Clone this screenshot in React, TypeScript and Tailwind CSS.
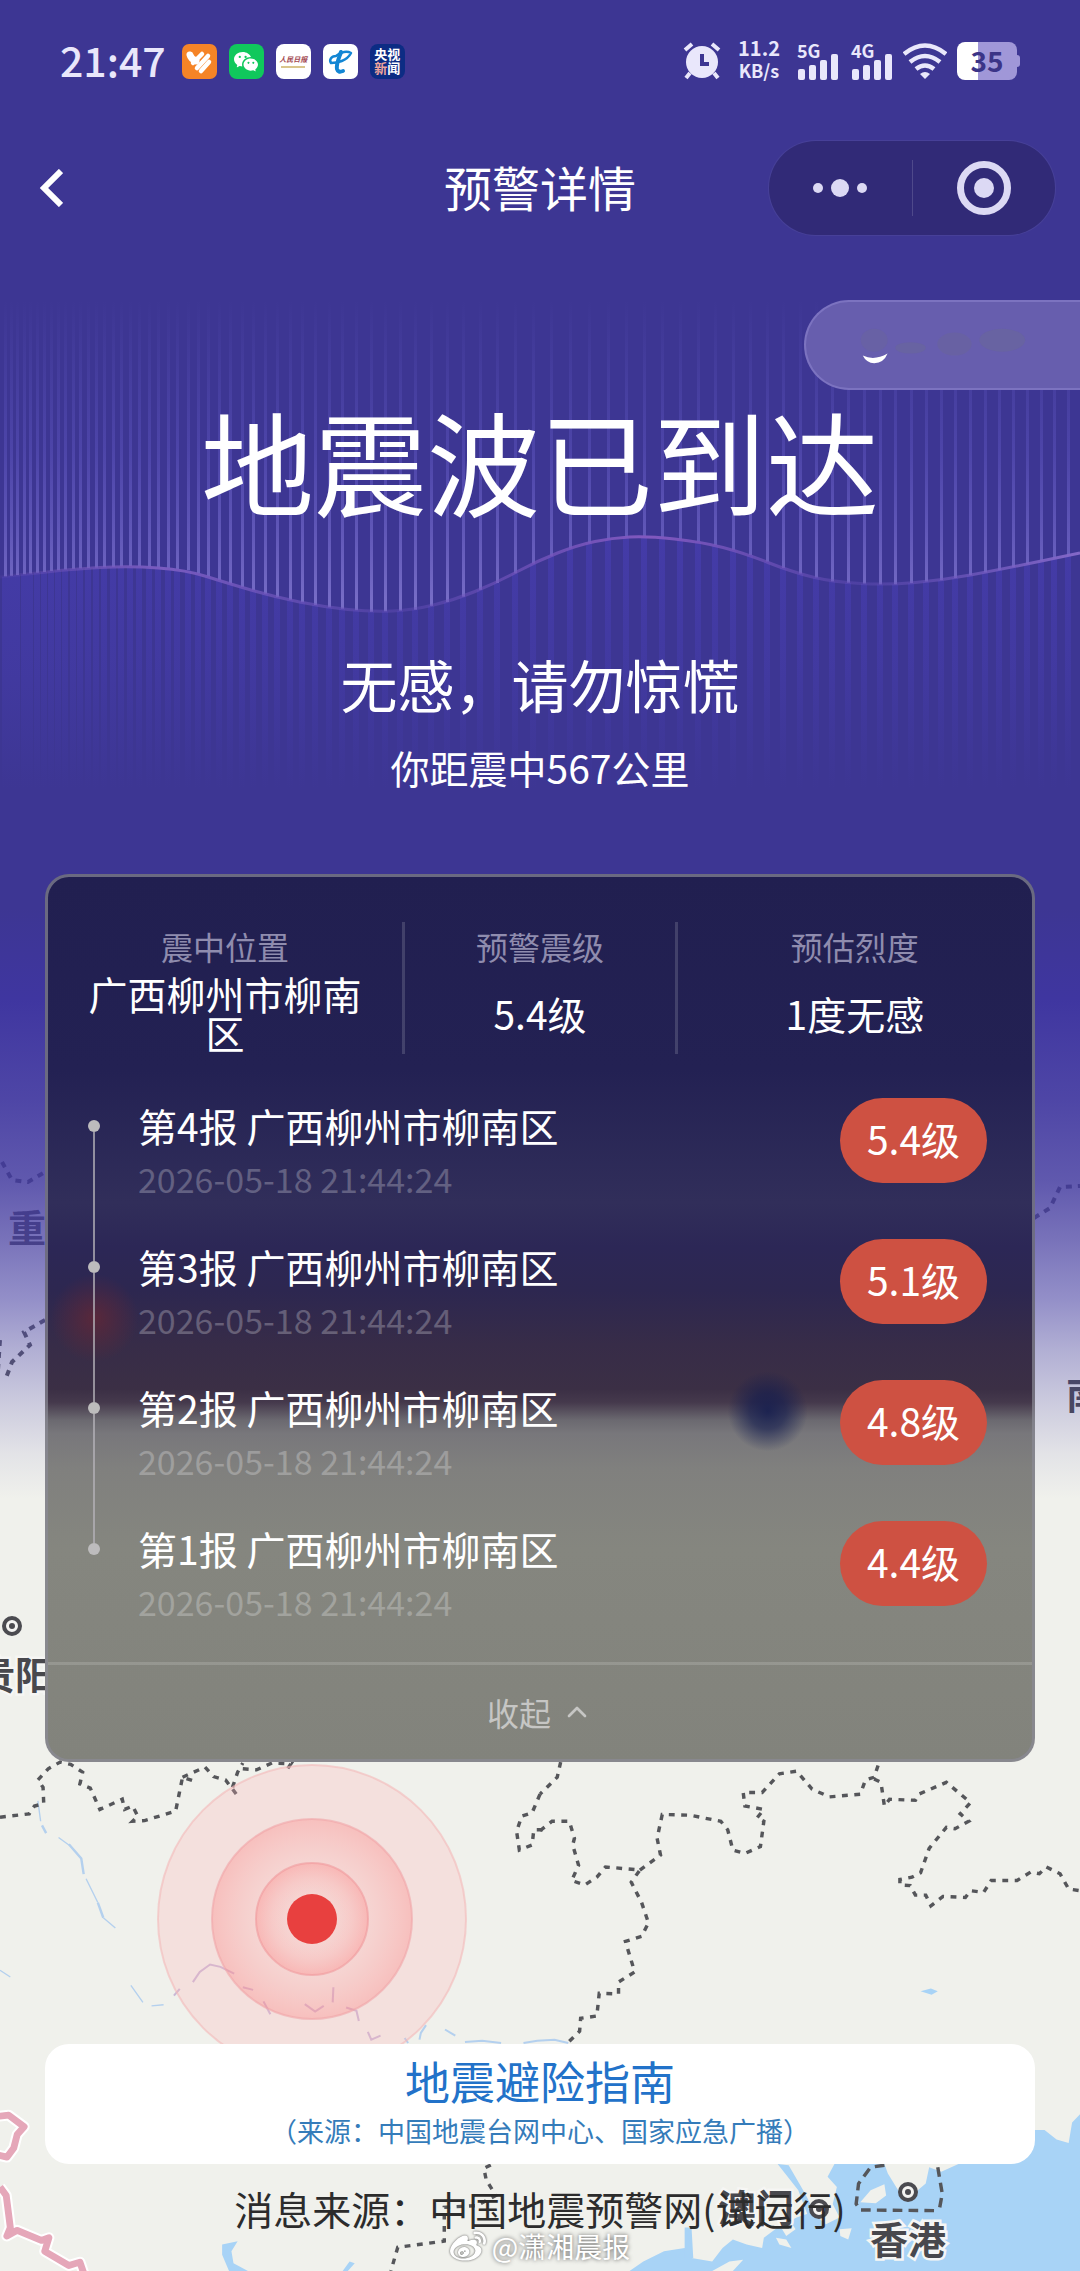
import React, { useState } from "react";
import { SiSinaweibo } from "react-icons/si";
import { BsWechat } from "react-icons/bs";
import { LuChevronUp } from "react-icons/lu";

const reports = [
  { no: 4, level: "5.4级" },
  { no: 3, level: "5.1级" },
  { no: 2, level: "4.8级" },
  { no: 1, level: "4.4级" },
].map((r) => ({ ...r, place: "广西柳州市柳南区", time: "2026-05-18 21:44:24" }));

const stats = [
  { label: "震中位置", value: "广西柳州市柳南区", className: "px-9" },
  { label: "预警震级", value: "5.4级", className: "border-x-3 border-white/15" },
  { label: "预估烈度", value: "1度无感", className: "" },
];

/**
 * Wave curve, sampled as [x, y]
 */
const wave = [
  [0, 577], [69, 569], [131, 566], [186, 570], [227, 583], [275, 597], [324, 607], [372, 612], [413, 610],
  [454, 600], [496, 583], [537, 561], [578, 545], [612, 538], [647, 536], [702, 542], [744, 553], [792, 572],
  [833, 582], [888, 585], [943, 580], [998, 570], [1080, 553],
];

function waveY(x: number) {
  const i = Math.max(1, wave.findIndex((p) => p[0] >= x));
  const [x0, y0] = wave[i - 1];
  const [x1, y1] = wave[i];
  return y0 + ((y1 - y0) * (x - x0)) / (x1 - x0);
}

// Smooth the samples by running quadratic curves through their midpoints
const wavePath =
  `M${wave[0].join(" ")}` +
  wave
    .slice(1, -1)
    .map(([x, y], i) => {
      const [nx, ny] = wave[i + 2];
      return ` Q${x} ${y} ${(x + nx) / 2} ${(y + ny) / 2}`;
    })
    .join("") +
  ` L${wave[wave.length - 1].join(" ")}`;

// Bars stand close together on the left and spread out towards the middle
const bars: number[] = [];
for (let x = 4; x < 1080; x += x < 560 ? 6 + x / 43 : 19 - (x - 560) / 90) {
  bars.push(Math.round(x));
}

function WaveArt() {
  return (
    <g>
      <defs>
        <linearGradient id="barUp" gradientUnits="userSpaceOnUse" x1="0" y1="300" x2="0" y2="600">
          <stop offset="0" stopColor="#6a60d0" stopOpacity="0" />
          <stop offset="0.5" stopColor="#6a60d0" stopOpacity="0.35" />
          <stop offset="1" stopColor="#8f84dc" stopOpacity="0.7" />
        </linearGradient>
        <linearGradient id="barDown" gradientUnits="userSpaceOnUse" x1="0" y1="540" x2="0" y2="790">
          <stop offset="0" stopColor="#463dae" stopOpacity="0.75" />
          <stop offset="0.5" stopColor="#463dae" stopOpacity="0.5" />
          <stop offset="1" stopColor="#463dae" stopOpacity="0" />
        </linearGradient>
        <linearGradient id="waveLine" x1="0" x2="1" y1="0" y2="0">
          <stop offset="0" stopColor="#7a58bc" stopOpacity="0.1" />
          <stop offset="0.15" stopColor="#7a5cc0" />
          <stop offset="0.37" stopColor="#6a52bc" stopOpacity="0.35" />
          <stop offset="0.6" stopColor="#8259bf" />
          <stop offset="0.8" stopColor="#6a52bc" stopOpacity="0.35" />
          <stop offset="1" stopColor="#8468c8" />
        </linearGradient>
      </defs>
      {bars.map((x) => (
        <g key={x}>
          <rect x={x} y={300} width={3} height={waveY(x) - 300} fill="url(#barUp)" />
          <rect x={x - 2} y={waveY(x)} width={6} height={790 - waveY(x)} fill="url(#barDown)" />
        </g>
      ))}
      <path d={wavePath} fill="none" stroke="url(#waveLine)" strokeWidth="3" />
    </g>
  );
}

function CityRing({ x, y }: { x: number; y: number }) {
  return (
    <g>
      <circle cx={x} cy={y} r="8" fill="#f4f4f2" stroke="#4b4b50" strokeWidth="4" />
      <circle cx={x} cy={y} r="3" fill="#4b4b50" />
    </g>
  );
}

function MapBackground() {
  return (
    <svg
      aria-hidden="true"
      className="absolute inset-0 -z-10 h-full w-full"
      viewBox="0 0 1080 2271"
      preserveAspectRatio="xMidYMin slice"
    >
      <defs>
        <linearGradient id="veil" x1="0" x2="0" y1="0" y2="1">
          <stop offset="0" stopColor="#3d3693" />
          <stop offset="0.4" stopColor="#3d3693" />
          <stop offset="0.44" stopColor="#3f36a0" />
          <stop offset="0.484" stopColor="#4037a0" stopOpacity="0.92" />
          <stop offset="0.52" stopColor="#4037a0" stopOpacity="0.82" />
          <stop offset="0.546" stopColor="#453ca4" stopOpacity="0.7" />
          <stop offset="0.572" stopColor="#4a42ac" stopOpacity="0.56" />
          <stop offset="0.594" stopColor="#4a42ac" stopOpacity="0.38" />
          <stop offset="0.616" stopColor="#4a42ac" stopOpacity="0.23" />
          <stop offset="0.64" stopColor="#4a42ac" stopOpacity="0.08" />
          <stop offset="0.66" stopColor="#4a42ac" stopOpacity="0" />
        </linearGradient>
        <radialGradient id="ring">
          <stop offset="0.4" stopColor="#ff9a9a" stopOpacity="0.08" />
          <stop offset="1" stopColor="#ff7a7a" stopOpacity="0.32" />
        </radialGradient>
      </defs>
      <rect width="1080" height="2271" fill="#f0f1ec" />

      {/* Sea and rivers */}
      <g transform="translate(540 1740) scale(0.3444 0.3386)" fill="#a8d3f6">
        <path d="M1568 1105 L1545 1130 1535 1190 1500 1180 1465 1152 1430 1152 1400 1220 1215 1252 1165 1275 1130 1262 1120 1310 1085 1340 1040 1330 1010 1280 1000 1252 855 1252 835 1290 862 1320 850 1370 870 1410 830 1430 790 1395 745 1410 690 1440 650 1470 645 1500 600 1490 560 1475 530 1500 500 1540 440 1530 420 1500 360 1510 300 1540 260 1568 1568 1568Z" />
        <path d="M690 1252 L722 1256 770 1340 800 1400 780 1410 750 1330Z" />
        <path d="M420 1440 L440 1440 445 1530 420 1530Z M1105 742 L1135 734 1155 742 1137 752Z" />
        <path fill="#f0f1ec" d="M930 1365 L960 1330 1000 1312 1005 1345 975 1368Z M700 1440 L730 1425 742 1445 715 1465Z M685 1470 L715 1475 730 1500 695 1490Z M870 1445 L905 1442 895 1475 872 1465Z M500 1568 L550 1540 590 1535 560 1568Z" />
      </g>
      <g transform="translate(0 1740) scale(0.3444 0.3386)" fill="none" stroke="#b4d0ee">
        <path fill="#a8d3f6" stroke="none" d="M645 1490 L690 1480 672 1510 678 1545 720 1568 665 1568 645 1520Z M995 1568 L1015 1540 1030 1545 1010 1568Z" />
        <path strokeWidth="7" d="M122 252 L134 275 M200 308 L236 350 243 396 M284 480 L300 525" />
        <path strokeWidth="4" d="M110 180 L118 240 M170 288 L200 310 M250 410 L284 480 M300 525 L335 555 M0 680 L30 700 M380 725 L415 775 M440 785 L475 782" />
        <path strokeWidth="6" stroke="#c9b8d6" d="M560 715 L580 685 610 663 640 670 680 690 M705 730 L735 738 M505 755 L522 735 M765 772 L785 810 M885 780 L915 802 940 785 M968 730 L966 775 M1005 790 L1035 800 1042 830 M1068 862 L1078 885 1105 873" />
        <path strokeWidth="6" d="M1175 880 L1185 895 M1237 842 L1222 865 1218 885 M1292 855 L1322 873 M1350 892 L1400 888 1455 895 M1520 895 L1560 888 1610 885 1650 895" />
      </g>

      {/* National border */}
      <g transform="translate(0 1740) scale(0.3444 0.3386)" fill="none" strokeLinejoin="round">
        <path d="M-10 1112 L25 1108 70 1142 50 1165 40 1205 20 1232 -10 1225 M0 1320 L18 1345 30 1440 20 1465 50 1448 120 1478 142 1470 130 1510 200 1552 232 1542 245 1580" stroke="#fff" strokeWidth="32" />
        <path d="M-10 1112 L25 1108 70 1142 50 1165 40 1205 20 1232 -10 1225 M0 1320 L18 1345 30 1440 20 1465 50 1448 120 1478 142 1470 130 1510 200 1552 232 1542 245 1580" stroke="#e5a7b9" strokeWidth="20" />
      </g>

      {/* Province borders */}
      <g fill="none" stroke="#55565a" strokeWidth="10" strokeDasharray="17 19">
        <path transform="translate(0 1740) scale(0.3444 0.3386)" d="M0 228 L85 218 100 195 127 188 125 140 110 118 140 85 175 65 205 72 240 95 232 130 262 142 290 205 355 175 362 205 385 195 400 225 385 240 420 238 510 210 520 160 530 110 560 120 M530 110 L595 80 620 108 655 118 690 165 M675 140 L690 95 705 68 M705 85 L745 88 790 68 845 70 830 92 M1568 160 L1545 215 1515 225 1500 270 1508 325 1545 310 1550 265 1580 265" />
        <path transform="translate(0 1740) scale(0.3444 0.3386)" d="M1425 1255 L1405 1265 1412 1300 1440 1345 1385 1375 1290 1380 1290 1480 1155 1498 1135 1568" />
        <path transform="translate(540 1740) scale(0.3444 0.3386)" d="M60 65 L50 110 0 160 M0 268 L35 240 85 240 100 290 95 310 112 370 92 415 130 428 165 405 190 375 290 384 265 420 295 480 315 540 295 580 248 595 275 685 228 715 228 750 172 748 165 815 118 822 115 860 80 895 M290 384 L350 340 340 290 355 220 435 222 525 240 545 265 560 325 595 335 640 315 650 240 630 230 650 205 595 195 590 155 645 155 695 100 745 92 790 145 840 168 930 160 945 118 970 110 985 65 M970 115 L990 125 1000 195 1015 175 1090 178 1100 160 1180 125 1250 185 1220 218 1245 240 1205 262 1180 258 1130 320 1105 392 1080 405 1045 412 1045 428 1075 430 1090 458 1120 458 1135 490 1170 462 1235 465 1250 445 1288 450 1310 415 1385 415 1425 390 1450 395 1470 375 1510 395 1535 440 1568 445" />
        <path transform="translate(540 1740) scale(0.3444 0.3386)" strokeDasharray="28 18" d="M1000 1256 L960 1262 925 1310 918 1370 930 1388 1160 1390 M1155 1262 L1168 1340 1158 1395" />
        <path d="M2 1162 L12 1180 28 1182 45 1172 M45 1320 L24 1332 30 1345 12 1362 6 1378 M0 1340 L-2 1370 M1034 1218 L1050 1208 1060 1187 1080 1186" strokeWidth="4" strokeDasharray="6 6" />
      </g>

      <g fontFamily="'Noto Sans CJK SC', sans-serif" fontWeight="700" fontSize="38" fill="#48484d" stroke="#f6f6f4" strokeWidth="5" paintOrder="stroke">
        <text x="8" y="1242" stroke="none">重庆</text>
        <text x="1066" y="1409" stroke="none">南昌</text>
        <text x="-23" y="1689">贵阳</text>
        <text x="870" y="2254">香港</text>
        <text x="718" y="2222">澳门</text>
      </g>
      <CityRing x={12} y={1626} />
      <CityRing x={908} y={2192} />
      <CityRing x={819} y={2209} />

      {/* Epicentre */}
      <circle cx="312" cy="1919" r="154" fill="#ffb4b8" fillOpacity="0.28" stroke="#f4b9b9" strokeOpacity="0.6" strokeWidth="2" />
      <circle cx="312" cy="1919" r="100" fill="url(#ring)" stroke="#f0a5a8" strokeOpacity="0.6" strokeWidth="2" />
      <circle cx="312" cy="1919" r="56" fill="url(#ring)" stroke="#f09a9c" strokeOpacity="0.6" strokeWidth="2" />
      <circle cx="312" cy="1919" r="25" fill="#e8403f" />

      <rect width="1080" height="2271" fill="url(#veil)" />
      <WaveArt />
    </svg>
  );
}

function Signal({ name }: { name: string }) {
  return (
    <div className="flex w-[42px] flex-col text-lg leading-4 font-bold">
      <span>{name}</span>
      <svg viewBox="0 0 42 26" className="-mt-1 h-[26px] w-[42px]" fill="currentColor">
        <rect x="1" y="15" width="7" height="11" rx="2" />
        <rect x="12" y="11" width="7" height="15" rx="2" />
        <rect x="23" y="6" width="7" height="20" rx="2" />
        <rect x="34" y="0" width="7" height="26" rx="2" />
      </svg>
    </div>
  );
}

function StatusBar() {
  return (
    <div className="flex h-[122px] items-center justify-between px-[60px] text-[#e9e7fb]">
      <div className="flex items-center gap-3">
        <span className="mr-1 pb-1 text-[41px] leading-none font-medium">21:47</span>
        <svg viewBox="0 0 35 35" className="size-[35px]">
          <rect width="35" height="35" rx="7" fill="#f58427" />
          <g fill="none" stroke="#fff" strokeLinecap="round">
            <path d="M8 11 Q9 15 14 17" strokeWidth="7" />
            <path d="M11 19 L20 10 M15 24 L26 12" strokeWidth="4.5" />
            <path d="M19 27 L27 18" strokeWidth="4.5" />
          </g>
        </svg>
        <span className="flex size-[35px] items-center justify-center rounded-lg bg-[#10c85c]">
          <BsWechat className="size-6 text-white" />
        </span>
        <span className="flex size-[35px] flex-col items-center justify-center rounded-lg bg-white">
          <span className="text-[7px] leading-[10px] font-bold whitespace-nowrap text-[#a34a52] italic">人民日报</span>
          <span className="mt-0.5 h-0.5 w-6 bg-[#d9c58c]" />
        </span>
        <svg viewBox="0 0 35 35" className="size-[35px]">
          <rect width="35" height="35" rx="7" fill="#fff" />
          <g fill="none" stroke="#1286d4" strokeLinecap="round" strokeLinejoin="round">
            <path d="M13 12 C8 12 6 16 8 19 C14 19 24 17 28 9 C23 6 17 9 13 12" strokeWidth="2.5" />
            <path d="M18 8 C16 14 13 20 14 25 Q15 29 20 27" strokeWidth="4" />
          </g>
        </svg>
        <span className="flex size-[35px] flex-col items-center justify-center rounded-lg bg-[#0c2c84] text-[13px] leading-[14px] font-bold text-white">
          <span>央视</span>
          <span><span className="text-[#f0a49c]">新</span>闻</span>
        </span>
      </div>

      <div className="flex items-center">
        <svg viewBox="0 0 38 38" className="size-[38px]">
          <circle cx="19" cy="20" r="16" fill="currentColor" />
          <path d="M2 8 L9 2 M36 8 L29 2 M7 31 L3 36 M31 31 L35 36" stroke="currentColor" strokeWidth="4" />
          <path d="M19 12 V22 H26" fill="none" stroke="#3d3693" strokeWidth="4" />
        </svg>
        <div className="ml-4 flex w-11 flex-col items-center pb-1 text-xl leading-[22px] font-bold">
          <span>11.2</span>
          <span className="text-lg leading-[22px]">KB/s</span>
        </div>
        <div className="ml-4 flex gap-3 pb-px">
          <Signal name="5G" />
          <Signal name="4G" />
        </div>
        <svg viewBox="0 0 44 36" className="ml-2.5 h-9 w-11" fill="none" stroke="currentColor" strokeWidth="4.5">
          <path d="M1 11 Q22 -6 43 11 M7 19 Q22 7 37 19 M13 26 Q22 19 31 26" />
          <path d="M17 31 Q22 27 27 31 L22 36Z" fill="currentColor" stroke="none" />
        </svg>
        <div className="ml-2.5 flex items-center">
          <div className="flex h-[38px] w-[60px] items-center justify-center rounded-lg bg-linear-to-r from-white from-35% to-[#a097d8] to-35% pb-0.5 text-[28px] leading-none font-bold text-[#3b3487]">35</div>
          <div className="h-3 w-[3px] rounded-r bg-[#a097d8]" />
        </div>
      </div>
    </div>
  );
}

function Header() {
  return (
    <header className="mt-[19px] grid grid-cols-[1fr_auto_1fr] items-center px-[25px]">
      <button type="button" aria-label="返回" className="justify-self-start pl-3.5">
        <svg viewBox="0 0 24 38" className="h-[38px] w-6" fill="none" stroke="#fff" strokeWidth="6">
          <path d="M22 2 L5 19 L22 36" />
        </svg>
      </button>
      <h1 className="pb-1 text-5xl leading-none">预警详情</h1>
      <div className="flex h-[94px] w-[286px] items-center justify-self-end rounded-full bg-[#312a77] text-[#dcd9f4] ring-1 ring-white/5">
        <button type="button" aria-label="更多" className="flex h-full flex-1 items-center justify-center gap-2">
          <span className="size-2.5 rounded-full bg-current" />
          <span className="size-[18px] rounded-full bg-current" />
          <span className="size-2.5 rounded-full bg-current" />
        </button>
        <span className="h-14 w-px bg-white/15" />
        <button type="button" aria-label="关闭" className="flex h-full flex-1 items-center justify-center">
          <span className="flex size-[54px] items-center justify-center rounded-full border-7 border-current">
            <span className="size-5 rounded-full bg-current" />
          </span>
        </button>
      </div>
    </header>
  );
}

function ReportCard() {
  const [open, setOpen] = useState(true);

  return (
    <section className="mx-[45px] mt-[87px] overflow-hidden rounded-[24px] border-3 border-[#8a8a96]/70 bg-[radial-gradient(circle_at_5%_50%,#6a2733b3_0,#6a273300_44px),radial-gradient(circle_at_73%_60.5%,#121b4ed9_0,#121b4ea0_18px,#121b4e00_40px),linear-gradient(#211f50_0%,#232153_22%,#312e5a_37%,#2c2756_42%,#2d2750_47%,#372c48_53%,#3b2f45_58%,#45394c_59.5%,#6b6970_61.5%,#78777b_63%,#80807e_67%,#85867f_76%,#82837c_100%)] bg-origin-border pt-[45px]">
      <dl className="grid grid-cols-[minmax(0,9fr)_minmax(0,7fr)_minmax(0,9fr)] text-center">
        {stats.map((s) => (
          <div key={s.label} className={s.className}>
            <dt className="pb-0.5 text-[32px] leading-[48px] text-[#8f8cae]">{s.label}</dt>
            <dd className="flex h-[82px] items-center justify-center text-[39px] leading-[39px]">{s.value}</dd>
          </div>
        ))}
      </dl>

      {open && (
        <ol className="mt-11 pr-[45px] pl-10">
          {reports.map((r, i) => (
            <li key={r.no} className="flex">
              <div className="mt-[22px] -mb-[22px] flex w-3 flex-col items-center">
                <span className="size-3 rounded-full bg-[#bdbcbd]" />
                {i < reports.length - 1 && <span className="w-0.5 flex-1 bg-[#b4b2b8]/75" />}
              </div>
              <div className="ml-[38px] flex-1 pb-[33px]">
                <p className="text-[39px] leading-[54px]">{`第${r.no}报 ${r.place}`}</p>
                <time className="block text-[34px] leading-[54px] text-white/25">{r.time}</time>
              </div>
              <span className="flex h-[85px] w-[147px] items-center justify-center rounded-full bg-[#ce5142] pb-1 text-[39px] leading-none">
                {r.level}
              </span>
            </li>
          ))}
        </ol>
      )}

      <button
        type="button"
        onClick={() => setOpen(!open)}
        className="flex h-[97px] w-full items-center justify-center gap-2.5 border-t-3 border-white/15 text-[32px] leading-none text-[#c6c6c4]"
      >
        {open ? "收起" : "展开"}
        <LuChevronUp className={open ? "size-8" : "size-8 rotate-180"} />
      </button>
    </section>
  );
}

export default function App() {
  return (
    <div className="relative isolate flex min-h-screen flex-col overflow-hidden font-['Noto_Sans_CJK_SC',sans-serif] text-white">
      <MapBackground />
      <StatusBar />
      <Header />

      <main className="flex flex-col">
        <div className="mt-[65px] flex h-[90px] w-[276px] items-center self-end rounded-l-full border-2 border-r-0 border-[#7c73c0] bg-[#675eae]">
          <svg viewBox="0 0 276 90" className="h-full w-full" aria-hidden="true">
            <path d="M54 56 Q66 62 80 54 Q76 64 66 64 Q58 64 54 56Z" fill="#fff" />
            <g fill="#6a6796">
              <ellipse cx="66" cy="40" rx="14" ry="12" opacity="0.35" />
              <ellipse cx="104" cy="48" rx="16" ry="6" opacity="0.5" />
              <ellipse cx="150" cy="44" rx="18" ry="12" opacity="0.45" />
              <ellipse cx="200" cy="40" rx="24" ry="12" opacity="0.5" />
            </g>
          </svg>
        </div>

        <div className="text-center">
          <p className="mt-3 text-[113px] leading-[114px]">地震波已到达</p>
          <p className="mt-[139px] text-[57px] leading-[57px]">无感，请勿惊慌</p>
          <p className="mt-[35px] text-[39px] leading-10">你距震中567公里</p>
        </div>

        <ReportCard />

        <a href="#guide" className="mx-[45px] mt-[282px] block rounded-[24px] bg-white pt-3.5 pb-[18px] text-center text-[#2272c9]">
          <span className="block text-[45px] leading-[46px]">地震避险指南</span>
          <span className="mt-3 block text-[27px] leading-[30px] text-[#357cba]">（来源：中国地震台网中心、国家应急广播）</span>
        </a>
      </main>

      <footer className="text-center">
        <p className="mt-6 text-[39px] leading-10 text-[#2c2c2c]">消息来源：中国地震预警网(试运行)</p>
        <p className="flex items-center justify-center gap-1.5 pb-1 text-[28px] leading-8 text-white text-shadow-[0_0_4px_#555]">
          <SiSinaweibo className="size-9 drop-shadow-[0_0_1px_#555]" />
          @潇湘晨报
        </p>
      </footer>
    </div>
  );
}
